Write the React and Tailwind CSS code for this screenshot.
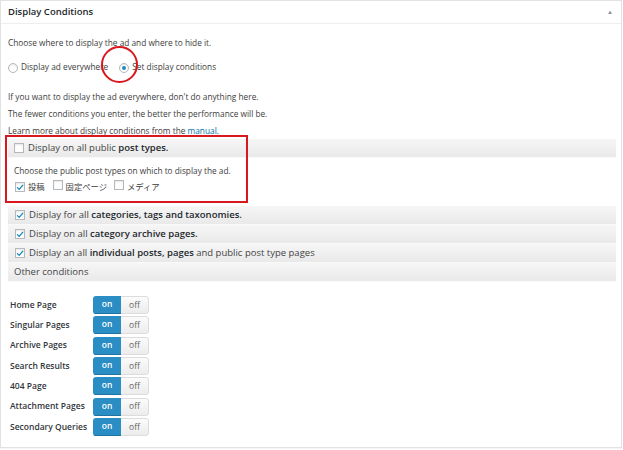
import React from "react";

function Check({ checked }) {
  return (
    <span className="inline-flex w-[10px] h-[10px] shrink-0 items-center justify-center border border-[#b4b9be] bg-white shadow-[inset_0_1px_2px_rgba(0,0,0,0.1)]">
      {checked && (
        <svg viewBox="0 0 10 10" className="w-[9px] h-[9px]">
          <path d="M1.8 5.2 L4 7.3 L8.4 2.2" fill="none" stroke="#1e8cbe" strokeWidth="1.6" strokeLinecap="round" strokeLinejoin="round" />
        </svg>
      )}
    </span>
  );
}

function Radio({ checked }) {
  return (
    <span className="inline-flex w-[10px] h-[10px] shrink-0 items-center justify-center rounded-full border border-[#b4b9be] bg-white shadow-[inset_0_1px_2px_rgba(0,0,0,0.1)]">
      {checked && <span className="w-[4px] h-[4px] rounded-full bg-[#1e8cbe]" />}
    </span>
  );
}

function GrayRow({ children, className = "" }) {
  return (
    <div className={"flex items-center h-[19px] bg-linear-to-b from-[#f6f6f6] to-[#e9e9e9] border-b border-[#f9f9f9] text-[9.5px] text-[#444] " + className}>
      {children}
    </div>
  );
}

const toggles = [
  "Home Page",
  "Singular Pages",
  "Archive Pages",
  "Search Results",
  "404 Page",
  "Attachment Pages",
  "Secondary Queries",
];

export default function App() {
  return (
    <div className="relative w-[623px] h-[450px] bg-white font-['Open_Sans',sans-serif] text-[#3c3c3c]">
      <div className="w-[622px] h-[448px] border border-[#e2e2e2] bg-white shadow-[0_1px_1px_rgba(0,0,0,0.04)]">
        <div className="flex items-center justify-between h-[23px] pl-[7px] pr-[8px] border-b border-[#eeeeee]">
          <span className="text-[9.5px] font-semibold text-[#23282d]">Display Conditions</span>
          <span className="text-[6px] text-[#8a8f94] leading-none">▲</span>
        </div>
        <div className="pl-[7px] pr-[5px]">
          <div className="mt-[10px] h-[17px] leading-[17px] text-[8.3px]">
            Choose where to display the ad and where to hide it.
          </div>
          <div className="mt-[8px] h-[17px] flex items-center text-[8.3px]">
            <Radio />
            <span className="ml-[3px]">Display ad everywhere</span>
            <span className="ml-[11px]"><Radio checked /></span>
            <span className="ml-[3px]">Set display conditions</span>
          </div>
          <div className="mt-[12px] text-[8.3px] leading-[17px]">
            <div>If you want to display the ad everywhere, don't do anything here.</div>
            <div>The fewer conditions you enter, the better the performance will be.</div>
            <div>
              Learn more about display conditions from the{" "}
              <span className="text-[#0073aa] underline decoration-[#0073aa] underline-offset-[1px]">manual</span>.
            </div>
          </div>
          <GrayRow className="h-[18px] pl-[6px] text-[9.3px]">
            <Check />
            <span className="ml-[4px]">
              Display on all public <span className="font-semibold text-[#23282d]">post types.</span>
            </span>
          </GrayRow>
          <div className="mt-[5px] h-[16px] flex items-center pl-[6px] text-[8.3px]">
            Choose the public post types on which to display the ad.
          </div>
          <div className="h-[16px] flex items-center pl-[7px] text-[8.3px] font-['Open_Sans','Noto_Sans_CJK_JP',sans-serif]">
            <Check checked />
            <span className="ml-[3px]">投稿</span>
            <span className="ml-[8px]"><Check /></span>
            <span className="ml-[3px]">固定ページ</span>
            <span className="ml-[7px]"><Check /></span>
            <span className="ml-[3px]">メディア</span>
          </div>
          <div className="mt-[11px]">
            <GrayRow className="pl-[7px]">
              <Check checked />
              <span className="ml-[4px]">
                Display for all <span className="font-semibold text-[#23282d]">categories, tags and taxonomies.</span>
              </span>
            </GrayRow>
            <GrayRow className="pl-[7px]">
              <Check checked />
              <span className="ml-[4px]">
                Display on all <span className="font-semibold text-[#23282d]">category archive pages.</span>
              </span>
            </GrayRow>
            <GrayRow className="pl-[7px]">
              <Check checked />
              <span className="ml-[4px]">
                Display an all <span className="font-semibold text-[#23282d]">individual posts, pages</span> and public post type pages
              </span>
            </GrayRow>
            <GrayRow className="pl-[6px]">
              <span>Other conditions</span>
            </GrayRow>
          </div>
          <div className="mt-[14px] flex flex-col gap-[2.33px] pl-[2px]">
            {toggles.map((t) => (
              <div key={t} className="flex items-center h-[18px]">
                <span className="w-[83px] text-[8.5px] font-semibold text-[#32373c]">{t}</span>
                <div className="flex h-[18px] w-[56px] rounded-[3px] overflow-hidden text-[8.5px]">
                  <span className="w-[28px] flex items-center justify-center bg-[#2a8dc3] text-white font-semibold border-b border-[#1f73a1]">on</span>
                  <span className="w-[28px] flex items-center justify-center bg-linear-to-b from-[#fbfbfb] to-[#ececec] text-[#666] border border-l-0 border-[#dcdcdc] rounded-r-[3px]">off</span>
                </div>
              </div>
            ))}
          </div>
        </div>
      </div>
      <div className="absolute left-[5px] top-[135px] w-[243px] h-[68px] border-2 border-[#d9171e]" />
      <div className="absolute left-[101px] top-[46px] w-[37px] h-[37px] rounded-full border-[2.5px] border-[#d9171e]" />
    </div>
  );
}
